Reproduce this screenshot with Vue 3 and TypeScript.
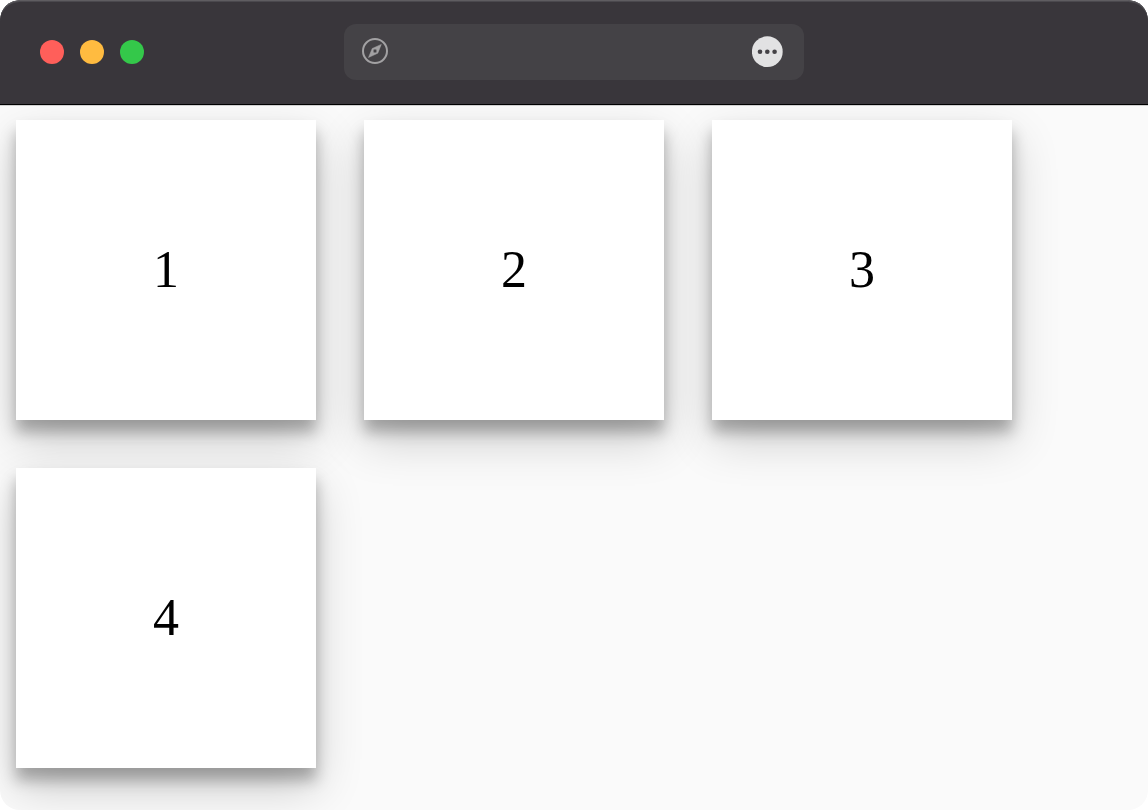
<script setup lang="ts">
import { ref } from 'vue'

const address = ref<string>('')
const lights: { name: string; label: string }[] = [
  { name: 'close', label: 'Close' },
  { name: 'minimize', label: 'Minimize' },
  { name: 'zoom', label: 'Zoom' },
]
const cards: number[] = [1, 2, 3, 4]
</script>

<template>
  <div class="window">
    <header class="toolbar">
      <div class="lights">
        <button
          v-for="light in lights"
          :key="light.name"
          type="button"
          class="light"
          :class="light.name"
          :aria-label="light.label"
        ></button>
      </div>
      <div class="address">
        <svg class="compass" viewBox="0 0 28 28" aria-hidden="true">
          <circle cx="13" cy="13" r="12" fill="none" stroke="currentColor" stroke-width="2" />
          <path
            fill="currentColor"
            fill-rule="evenodd"
            stroke="currentColor"
            stroke-width="0.5"
            stroke-linejoin="round"
            d="M19.3 6.4 15.8 15.2 6.5 19.5 10.2 10.5ZM13 11.1a1.9 1.9 0 1 0 0 3.8a1.9 1.9 0 1 0 0-3.8Z"
          />
        </svg>
        <input v-model="address" class="field" type="text" aria-label="Address" />
        <button type="button" class="more" aria-label="More">
          <svg viewBox="0 0 32 32" aria-hidden="true">
            <circle cx="15.3" cy="15.7" r="15.4" fill="#e2e2e3" />
            <g fill="#444246">
              <circle cx="8" cy="15.7" r="2.3" />
              <circle cx="15.3" cy="15.7" r="2.3" />
              <circle cx="22.6" cy="15.7" r="2.3" />
            </g>
          </svg>
        </button>
      </div>
    </header>
    <main class="page">
      <article v-for="card in cards" :key="card" class="card">{{ card }}</article>
    </main>
  </div>
</template>

<style>
body {
  margin: 0;
  background: #fff;
}
</style>

<style scoped>
.window {
  display: flex;
  flex-direction: column;
  min-height: 100vh;
  border-radius: 20px;
  overflow: hidden;
  background: #fafafa;
}

.toolbar {
  position: relative;
  z-index: 1;
  display: grid;
  grid-template-columns: 1fr minmax(0, 460px) 1fr;
  align-items: center;
  box-sizing: border-box;
  height: 104px;
  border-radius: 20px 20px 0 0;
  background: #39363b;
  box-shadow: inset 0 2px 0 -1px #5f5d61, inset 0 2px 0 #4b494e, 0 1px 0 #000, 0 2px 0 #d0d0d0;
}

.lights {
  display: flex;
  gap: 16px;
  padding-left: 40px;
}

.light {
  width: 24px;
  height: 24px;
  padding: 0;
  border: 0;
  border-radius: 50%;
}

.close {
  background: #ff5f5a;
}

.minimize {
  background: #ffbb40;
}

.zoom {
  background: #34c84a;
}

.address {
  display: flex;
  align-items: center;
  box-sizing: border-box;
  height: 56px;
  padding: 0 20px 0 18px;
  border-radius: 12px;
  background: #444246;
}

.compass {
  flex: none;
  width: 28px;
  height: 28px;
  color: #a2a1a3;
}

.field {
  flex: 1;
  min-width: 0;
  padding: 0 12px;
  border: 0;
  outline: 0;
  background: transparent;
  color: #e2e2e3;
  font: 24px "Liberation Sans", sans-serif;
}

.more {
  flex: none;
  width: 32px;
  height: 32px;
  padding: 0;
  border: 0;
  background: transparent;
}

.more svg {
  display: block;
  width: 32px;
  height: 32px;
}

.page {
  display: flex;
  flex: 1;
  flex-wrap: wrap;
  align-content: flex-start;
  gap: 48px;
  padding: 16px;
}

.card {
  display: flex;
  align-items: center;
  justify-content: center;
  box-sizing: border-box;
  width: 300px;
  height: 300px;
  padding-bottom: 2px;
  background: #fff;
  box-shadow: 0 20px 44px rgba(0, 0, 0, 0.19), 0 12px 14px rgba(0, 0, 0, 0.28);
  color: #000;
  font: 52px "Liberation Serif", serif;
}
</style>
